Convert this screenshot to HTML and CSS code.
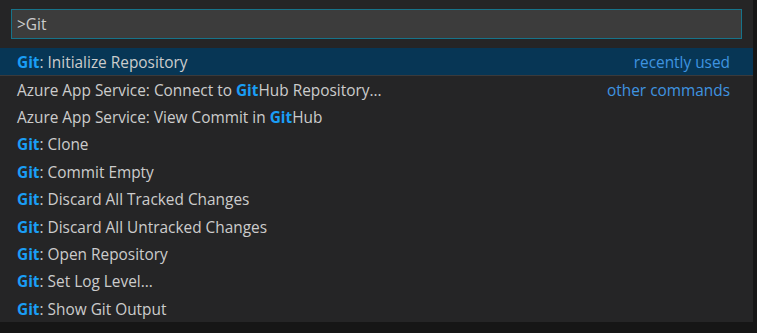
FILE: index.html
```html
<!DOCTYPE html>
<html lang="en">
<head>
  <meta charset="UTF-8">
  <meta name="viewport" content="width=device-width, initial-scale=1.0">
  <title>Command Palette</title>
  <link rel="stylesheet" href="styles.css">
</head>
<body>
  <div class="quick-input">
    <div class="input-box">
      <input class="input" type="text" value=">Git" spellcheck="false">
    </div>

    <ul class="list">
      <li class="item selected">
        <span class="label"><b class="hl">Git</b>: Initialize Repository</span>
        <span class="group">recently used</span>
      </li>
      <li class="item separator">
        <span class="label">Azure App Service: Connect to <b class="hl">Git</b>Hub Repository...</span>
        <span class="group">other commands</span>
      </li>
      <li class="item">
        <span class="label">Azure App Service: View Commit in <b class="hl">Git</b>Hub</span>
      </li>
      <li class="item"><span class="label"><b class="hl">Git</b>: Clone</span></li>
      <li class="item"><span class="label"><b class="hl">Git</b>: Commit Empty</span></li>
      <li class="item"><span class="label"><b class="hl">Git</b>: Discard All Tracked Changes</span></li>
      <li class="item"><span class="label"><b class="hl">Git</b>: Discard All Untracked Changes</span></li>
      <li class="item"><span class="label"><b class="hl">Git</b>: Open Repository</span></li>
      <li class="item"><span class="label"><b class="hl">Git</b>: Set Log Level...</span></li>
      <li class="item"><span class="label"><b class="hl">Git</b>: Show Git Output</span></li>
    </ul>
  </div>
</body>
</html>
```

FILE: styles.css
```css
:root {
  --widget-bg: #252526;
  --input-bg: #3c3c3c;
  --focus-border: #17738a;
  --text: #cccccc;
  --highlight: #1a9ef5;
  --group: #3f94e0;
  --selected: #073655;
  --separator: #3a3a3b;
}

* {
  margin: 0;
  padding: 0;
  box-sizing: border-box;
}

body {
  background: #161616;
  font-family: "Segoe UI", "Open Sans", sans-serif;
  font-size: 15.4px;
  color: var(--text);
}

.quick-input {
  width: 753px;
  height: 322px;
  background: var(--widget-bg);
  padding-top: 9px;
  overflow: hidden;
}

.input-box {
  margin: 0 11px 9px 11px;
  height: 30px;
  border: 1px solid var(--focus-border);
  background: var(--input-bg);
}

.input {
  width: 100%;
  height: 100%;
  border: none;
  outline: none;
  background: transparent;
  color: var(--text);
  font: inherit;
  padding: 1px 5px 0;
}

.list {
  list-style: none;
}

.item {
  height: 27.4px;
  display: flex;
  align-items: center;
  justify-content: space-between;
  padding: 1px 23px 0 17px;
  white-space: nowrap;
}

.item.selected {
  height: 27px;
  background: var(--selected);
}

.item.separator {
  height: 28.4px;
  border-top: 1px solid var(--separator);
}

.hl {
  color: var(--highlight);
  font-weight: 700;
}

.group {
  color: var(--group);
}
```
